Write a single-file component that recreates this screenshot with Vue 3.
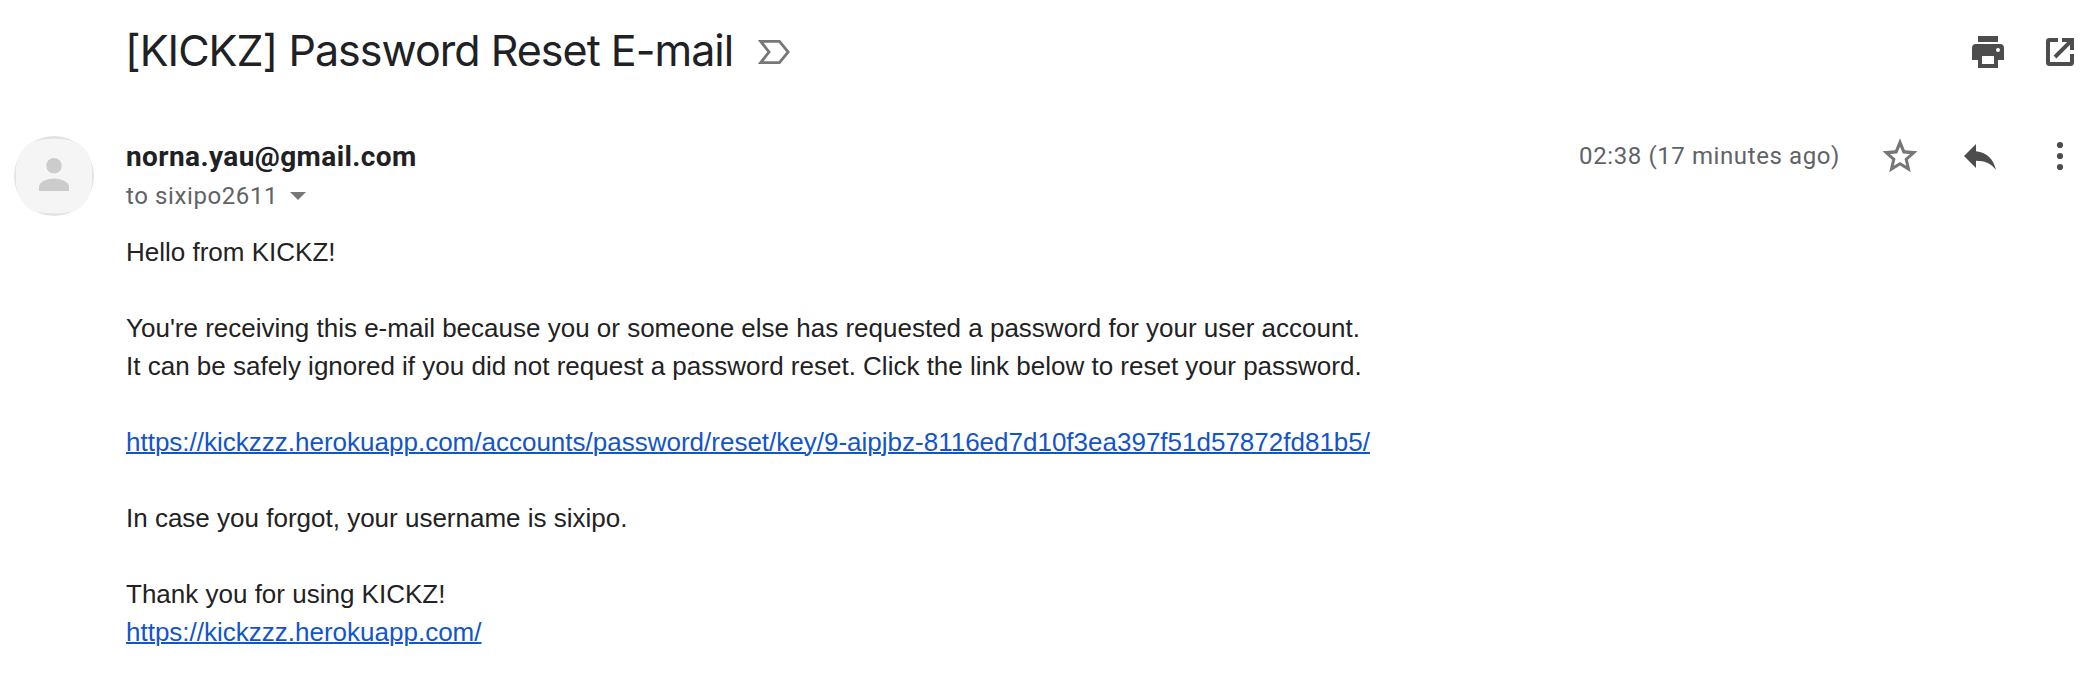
<script setup>
const resetUrl = 'https://kickzzz.herokuapp.com/accounts/password/reset/key/9-aipjbz-8116ed7d10f3ea397f51d57872fd81b5/'
const siteUrl = 'https://kickzzz.herokuapp.com/'
</script>

<template>
  <main class="mail">
    <header class="subject-row">
      <h1 class="subject">[KICKZ] Password Reset E-mail</h1>
      <svg class="marker" viewBox="0 0 32 24" aria-hidden="true">
        <path d="M2.7 1.4H21.4L30.2 12 21.4 22.6H2.7L11 12Z" fill="none" stroke="#777" stroke-width="2.8" />
      </svg>
      <div class="tools">
        <svg class="icon" viewBox="0 0 20 20" aria-label="Print">
          <path d="M5 2h10v3H5z" />
          <path fill-rule="evenodd" d="M4 6h12a2 2 0 0 1 2 2v6h-3v4H5v-4H2V8a2 2 0 0 1 2-2zM7 12v4h6v-4zM15 8a1 1 0 1 0 0 2 1 1 0 0 0 0-2z" />
        </svg>
        <svg class="icon" viewBox="0 0 20 20" aria-label="Open in new window">
          <path d="M9 3H4.7A1.7 1.7 0 0 0 3 4.700v10.600A1.700 1.700 0 0 0 4.700 17h10.600a1.700 1.700 0 0 0 1.700-1.700V11h-2v4H5V5h4z" />
          <path d="M11 3h6v6h-2V6.400L8.200 13.200 6.800 11.800 13.600 5H11z" />
        </svg>
      </div>
    </header>

    <section class="message">
      <div class="avatar">
        <svg viewBox="0 0 80 80" aria-hidden="true">
          <circle cx="40" cy="40" r="40" fill="#e2e2e2" />
          <path d="M17.500 6Q40-.5 62.500 6Q80 17 78 40Q80 62 62.500 74.500Q40 80.500 17.500 74.500Q0 62 2 40Q0 17 17.500 6Z" fill="#f5f5f5" />
          <circle cx="40" cy="29.700" r="7.700" fill="#ccc" />
          <path d="M25 55v-4.500c0-5 9-8 15-8s15 3 15 8V55z" fill="#ccc" />
        </svg>
      </div>

      <div class="content">
        <div class="meta">
          <div class="people">
            <div class="sender">norna.yau@gmail.com</div>
            <div class="recipient">
              <span>to sixipo2611</span>
              <svg class="caret" viewBox="0 0 16 8" aria-hidden="true"><path d="M0 0h16L8 8z" /></svg>
            </div>
          </div>
          <div class="actions">
            <span class="time">02:38 (17 minutes ago)</span>
            <svg class="icon star" viewBox="0 0 40 40" aria-label="Star">
              <path fill-rule="evenodd" d="M37.500 15.300L24.900 14.200 20 2.300 15.100 14.200 2.500 15.300 12.100 23.800 9.200 36.300 20 29.600 30.800 36.300 27.900 23.800ZM20 26L13.800 29.800 15.500 22.800 10 18 17.200 17.400 20 10.700 22.800 17.400 30 18 24.500 22.800 26.200 29.800Z" />
            </svg>
            <svg class="icon" viewBox="0 0 40 40" aria-label="Reply">
              <path d="M4 20L16 8V15.200C27.500 16.500 33.500 23.500 36 34C31 27.500 25.500 25 16 24.800V32Z" />
            </svg>
            <svg class="icon" viewBox="0 0 40 40" aria-label="More">
              <circle cx="20" cy="9" r="3.100" /><circle cx="20" cy="20" r="3.100" /><circle cx="20" cy="31" r="3.100" />
            </svg>
          </div>
        </div>

        <div class="body">
          <p>Hello from KICKZ!</p>
          <p>You're receiving this e-mail because you or someone else has requested a password for your user account.<br>It can be safely ignored if you did not request a password reset. Click the link below to reset your password.</p>
          <p><a :href="resetUrl">{{ resetUrl }}</a></p>
          <p>In case you forgot, your username is sixipo.</p>
          <p>Thank you for using KICKZ!<br><a :href="siteUrl">{{ siteUrl }}</a></p>
        </div>
      </div>
    </section>
  </main>
</template>

<style>
body {
  background: #fff;
}
</style>

<style scoped>
.mail {
  box-sizing: border-box;
  width: 2096px;
  height: 696px;
  padding: 24px 16px 0 14px;
  overflow: hidden;
  background: #fff;
}
.subject-row {
  display: flex;
  align-items: center;
  height: 56px;
  padding-left: 111px;
}
.subject {
  margin: 0;
  padding-bottom: 3px;
  font: 400 43px/53px Inter, sans-serif;
  letter-spacing: -0.98px;
  color: #202124;
  white-space: nowrap;
}
.marker {
  width: 32px;
  height: 24px;
  margin-left: 25px;
}
.tools {
  display: flex;
  gap: 32px;
  margin-left: auto;
}
.icon {
  display: block;
  width: 40px;
  height: 40px;
  fill: #4d4d4d;
}
.star {
  fill: #777;
}
.message {
  display: flex;
  gap: 32px;
  padding-top: 56px;
}
.avatar,
.avatar svg {
  display: block;
  width: 80px;
  height: 80px;
  flex: none;
}
.content {
  flex: 1;
}
.meta {
  display: flex;
  justify-content: space-between;
  height: 97px;
}
.sender {
  padding-top: 1px;
  font: 700 28px/39px Roboto, sans-serif;
  letter-spacing: 0.4px;
  color: #202124;
}
.recipient {
  display: flex;
  align-items: center;
  gap: 12px;
  font: 400 24px/40px Roboto, sans-serif;
  letter-spacing: 0.6px;
  color: #5f6368;
}
.caret {
  width: 16px;
  height: 8px;
  fill: #777;
}
.actions {
  display: flex;
  gap: 40px;
  height: 40px;
}
.time {
  font: 400 24px/40px Roboto, sans-serif;
  letter-spacing: 0.6px;
  color: #5f6368;
}
.body {
  font: 26px/38px "Liberation Sans", Arial, sans-serif;
  color: #222;
}
.body p {
  margin: 0 0 38px;
}
.body a {
  color: #15c;
  text-decoration: underline;
  text-decoration-thickness: 2px;
}
</style>
